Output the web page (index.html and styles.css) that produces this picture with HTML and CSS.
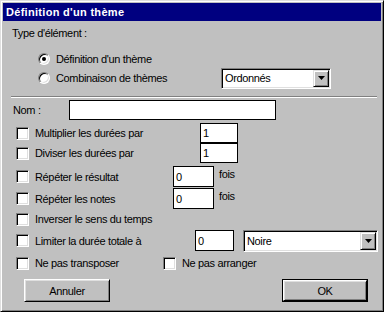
FILE: index.html
```html
<!DOCTYPE html>
<html lang="fr">
<head>
<meta charset="utf-8">
<title>Définition d'un thème</title>
<link rel="stylesheet" href="styles.css">
</head>
<body>
<div class="window">
  <div class="titlebar"><span class="title">Définition d'un thème</span></div>
  <div class="content">
    <div class="row type-row">Type d'élément :</div>

    <div class="row radio-row r1">
      <span class="radio checked"><span class="dot"></span></span>
      <span class="radio-label">Définition d'un thème</span>
    </div>
    <div class="row radio-row r2">
      <span class="radio"></span>
      <span class="radio-label">Combinaison de thèmes</span>
      <div class="select sel-ord"><span class="sel-text">Ordonnés</span><span class="arrow"><svg width="7" height="4" viewBox="0 0 7 4"><path d="M0 0h7L3.5 4z" fill="#000"/></svg></span></div>
    </div>

    <div class="sep"></div>

    <div class="row name-row">
      <span class="name-label">Nom :</span>
      <div class="edit name-edit"></div>
    </div>

    <div class="row cb-row cb1">
      <span class="check"></span>
      <span class="cb-label w-mult">Multiplier les durées par</span>
      <div class="edit num-edit">1</div>
    </div>
    <div class="row cb-row cb2">
      <span class="check"></span>
      <span class="cb-label w-mult">Diviser les durées par</span>
      <div class="edit num-edit">1</div>
    </div>
    <div class="row cb-row cb3">
      <span class="check"></span>
      <span class="cb-label w-rep">Répéter le résultat</span>
      <div class="edit rep-edit">0</div>
      <span class="fois">fois</span>
    </div>
    <div class="row cb-row cb4">
      <span class="check"></span>
      <span class="cb-label w-rep">Répéter les notes</span>
      <div class="edit rep-edit">0</div>
      <span class="fois">fois</span>
    </div>
    <div class="row cb-row cb5">
      <span class="check"></span>
      <span class="cb-label">Inverser le sens du temps</span>
    </div>
    <div class="row cb-row cb6">
      <span class="check"></span>
      <span class="cb-label w-lim">Limiter la durée totale à</span>
      <div class="edit lim-edit">0</div>
      <div class="select sel-noire"><span class="sel-text">Noire</span><span class="arrow"><svg width="7" height="4" viewBox="0 0 7 4"><path d="M0 0h7L3.5 4z" fill="#000"/></svg></span></div>
    </div>
    <div class="row cb-row cb7">
      <span class="check"></span>
      <span class="cb-label w-trans">Ne pas transposer</span>
      <span class="check"></span>
      <span class="cb-label">Ne pas arranger</span>
    </div>

    <div class="row buttons">
      <div class="btn btn-cancel">Annuler</div>
      <div class="btn btn-ok"><span class="btn-inner">OK</span></div>
    </div>
  </div>
</div>
</body>
</html>
```

FILE: styles.css
```css
html, body {
  margin: 0;
  padding: 0;
  background: #c0c0c0;
}

.window {
  width: 384px;
  height: 312px;
  box-sizing: border-box;
  background: #c0c0c0;
  border: 1px solid;
  border-color: #dfdfdf #000 #000 #dfdfdf;
  box-shadow: inset 1px 1px #fff, inset -1px -1px #808080;
  padding: 2px;
  font-family: "Liberation Sans", Arial, sans-serif;
  font-size: 11px;
  letter-spacing: -0.35px;
  color: #000;
}

.titlebar {
  height: 18px;
  background: #000080;
  display: flex;
  align-items: center;
  padding-left: 3px;
}

.title {
  color: #fff;
  font-weight: bold;
  font-size: 11px;
  letter-spacing: 0.3px;
}

.content {
  display: flex;
  flex-direction: column;
}

.row {
  display: flex;
  align-items: center;
}

.type-row {
  margin-top: 5px;
  height: 14px;
  padding-left: 9px;
}

.radio-row {
  padding-left: 35px;
}
.r1 { margin-top: 10px; height: 17px; }
.r2 { height: 22px; }

.radio {
  width: 12px;
  height: 12px;
  box-sizing: border-box;
  border-radius: 50%;
  border: 1px solid;
  border-color: #808080 #fff #fff #808080;
  box-shadow: inset 1px 1px #000, inset -1px -1px #dfdfdf;
  background: #fff;
  display: flex;
  align-items: center;
  justify-content: center;
  flex: none;
}
.dot {
  width: 4px;
  height: 4px;
  border-radius: 50%;
  background: #000;
}

.radio-label {
  margin-left: 6px;
  width: 165px;
  flex: none;
}

.select {
  height: 21px;
  box-sizing: border-box;
  border: 1px solid;
  border-color: #808080 #fff #fff #808080;
  box-shadow: inset 1px 1px #000, inset -1px -1px #dfdfdf;
  background: #fff;
  display: flex;
  align-items: stretch;
  padding: 1px;
  flex: none;
  color: #000;
}
.sel-ord { width: 110px; }
.sel-noire { width: 135px; height: 22px; margin-left: 9px; }

.sel-text {
  flex: 1;
  display: flex;
  align-items: center;
  padding-left: 2px;
}

.arrow {
  width: 16px;
  box-sizing: border-box;
  background: #c0c0c0;
  border: 1px solid;
  border-color: #dfdfdf #000 #000 #dfdfdf;
  box-shadow: inset 1px 1px #fff, inset -1px -1px #808080;
  display: flex;
  align-items: center;
  justify-content: center;
}

.sep {
  margin-top: 7px;
  margin-left: 8px;
  width: 366px;
  border-top: 1px solid #808080;
  border-bottom: 1px solid #fff;
}

.name-row {
  margin-top: 2px;
  height: 20px;
  padding-left: 10px;
}
.name-label {
  width: 56px;
  flex: none;
}

.edit {
  box-sizing: border-box;
  border: 1px solid #000;
  background: #fff;
  color: #000;
  height: 20px;
  display: flex;
  align-items: center;
  padding-left: 2px;
  flex: none;
}
.name-edit { width: 207px; }
.num-edit { width: 38px; }
.rep-edit { width: 41px; height: 21px; }
.lim-edit { width: 39px; height: 21px; }

.cb-row {
  height: 20px;
  padding-left: 13px;
}
.cb1 { margin-top: 3px; }
.cb3 { margin-top: 3px; height: 21px; }
.cb4 { margin-top: 1px; height: 21px; }
.cb6 { height: 21px; margin-top: 1px; }
.cb7 { margin-top: 2px; }

.check {
  width: 13px;
  height: 13px;
  box-sizing: border-box;
  border: 1px solid;
  border-color: #808080 #fff #fff #808080;
  box-shadow: inset 1px 1px #000, inset -1px -1px #dfdfdf;
  background: #fff;
  flex: none;
}

.cb-label {
  margin-left: 6px;
  flex: none;
}
.w-mult { width: 165px; }
.w-rep { width: 138px; }
.w-lim { width: 160px; }
.w-trans { width: 128px; }

.fois {
  margin-left: 5px;
  margin-top: -6px;
}

.buttons {
  margin-top: 6px;
  padding-left: 21px;
  height: 23px;
  gap: 172px;
}

.btn {
  width: 86px;
  height: 23px;
  box-sizing: border-box;
  background: #c0c0c0;
  border: 1px solid;
  border-color: #fff #000 #000 #fff;
  box-shadow: inset 1px 1px #dfdfdf, inset -1px -1px #808080;
  display: flex;
  align-items: center;
  justify-content: center;
  flex: none;
}

.btn-ok {
  border: 1px solid #000;
  box-shadow: none;
  padding: 0;
}
.btn-inner {
  width: 100%;
  height: 100%;
  box-sizing: border-box;
  border: 1px solid;
  border-color: #fff #000 #000 #fff;
  box-shadow: inset 1px 1px #dfdfdf, inset -1px -1px #808080;
  display: flex;
  align-items: center;
  justify-content: center;
}
```
